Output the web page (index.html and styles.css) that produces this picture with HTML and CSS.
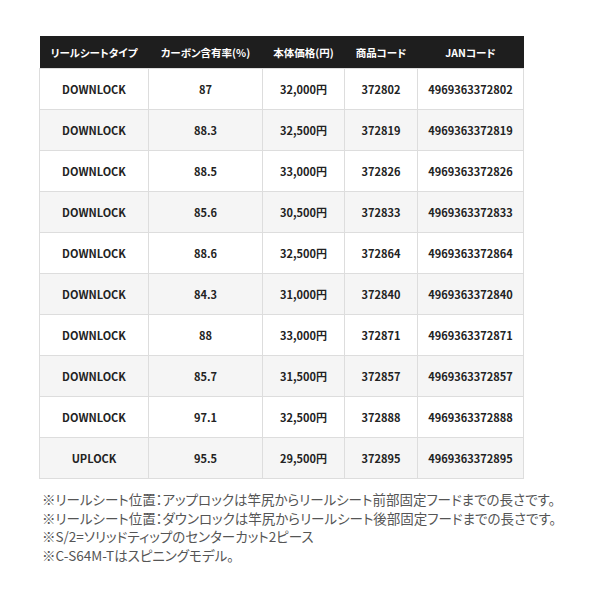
FILE: index.html
```html
<!DOCTYPE html>
<html lang="ja">
<head>
<meta charset="utf-8">
<link rel="stylesheet" href="styles.css">
</head>
<body>
<div class="wrap">
<table class="spec">
<thead>
<tr><th class="c1">リールシートタイプ</th><th class="c2">カーボン含有率(%)</th><th class="c3">本体価格(円)</th><th class="c4">商品コード</th><th class="c5">JANコード</th></tr>
</thead>
<tbody>
<tr><td>DOWNLOCK</td><td>87</td><td>32,000円</td><td>372802</td><td>4969363372802</td></tr>
<tr><td>DOWNLOCK</td><td>88.3</td><td>32,500円</td><td>372819</td><td>4969363372819</td></tr>
<tr><td>DOWNLOCK</td><td>88.5</td><td>33,000円</td><td>372826</td><td>4969363372826</td></tr>
<tr><td>DOWNLOCK</td><td>85.6</td><td>30,500円</td><td>372833</td><td>4969363372833</td></tr>
<tr><td>DOWNLOCK</td><td>88.6</td><td>32,500円</td><td>372864</td><td>4969363372864</td></tr>
<tr><td>DOWNLOCK</td><td>84.3</td><td>31,000円</td><td>372840</td><td>4969363372840</td></tr>
<tr><td>DOWNLOCK</td><td>88</td><td>33,000円</td><td>372871</td><td>4969363372871</td></tr>
<tr><td>DOWNLOCK</td><td>85.7</td><td>31,500円</td><td>372857</td><td>4969363372857</td></tr>
<tr><td>DOWNLOCK</td><td>97.1</td><td>32,500円</td><td>372888</td><td>4969363372888</td></tr>
<tr><td>UPLOCK</td><td>95.5</td><td>29,500円</td><td>372895</td><td>4969363372895</td></tr>
</tbody>
</table>
<div class="notes">
<p>※リールシート位置：アップロックは竿尻からリールシート前部固定フードまでの長さです。</p>
<p>※リールシート位置：ダウンロックは竿尻からリールシート後部固定フードまでの長さです。</p>
<p>※S/2=ソリッドティップのセンターカット2ピース</p>
<p>※C-S64M-Tはスピニングモデル。</p>
</div>
</div>
</body>
</html>
```
FILE: styles.css
```css
html, body { margin: 0; padding: 0; background: #fff; }
body { font-family: "Noto Sans CJK JP", "Noto Sans", sans-serif; font-feature-settings: "palt"; }
.wrap { padding: 36px 0 0 39px; }
.spec { border-collapse: collapse; table-layout: fixed; width: 484px; }
.spec th { background: #1e1e1e; color: #fff; font-size: 10.5px; font-weight: 700; height: 32px; padding: 0; text-align: center; }
.spec td { height: 40px; padding: 0; text-align: center; font-size: 11px; font-weight: 700; color: #222; border: 1px solid #ddd; }
.spec tbody tr:nth-child(even) td { background: #f5f5f5; }
.c1 { width: 109px; }
.c2 { width: 114px; }
.c3 { width: 82px; }
.c4 { width: 73px; }
.c5 { width: 106px; }
.notes { margin-top: 11px; padding-left: 3px; color: #555; font-size: 13.5px; line-height: 18.5px; }
.notes p { margin: 0; }
```
